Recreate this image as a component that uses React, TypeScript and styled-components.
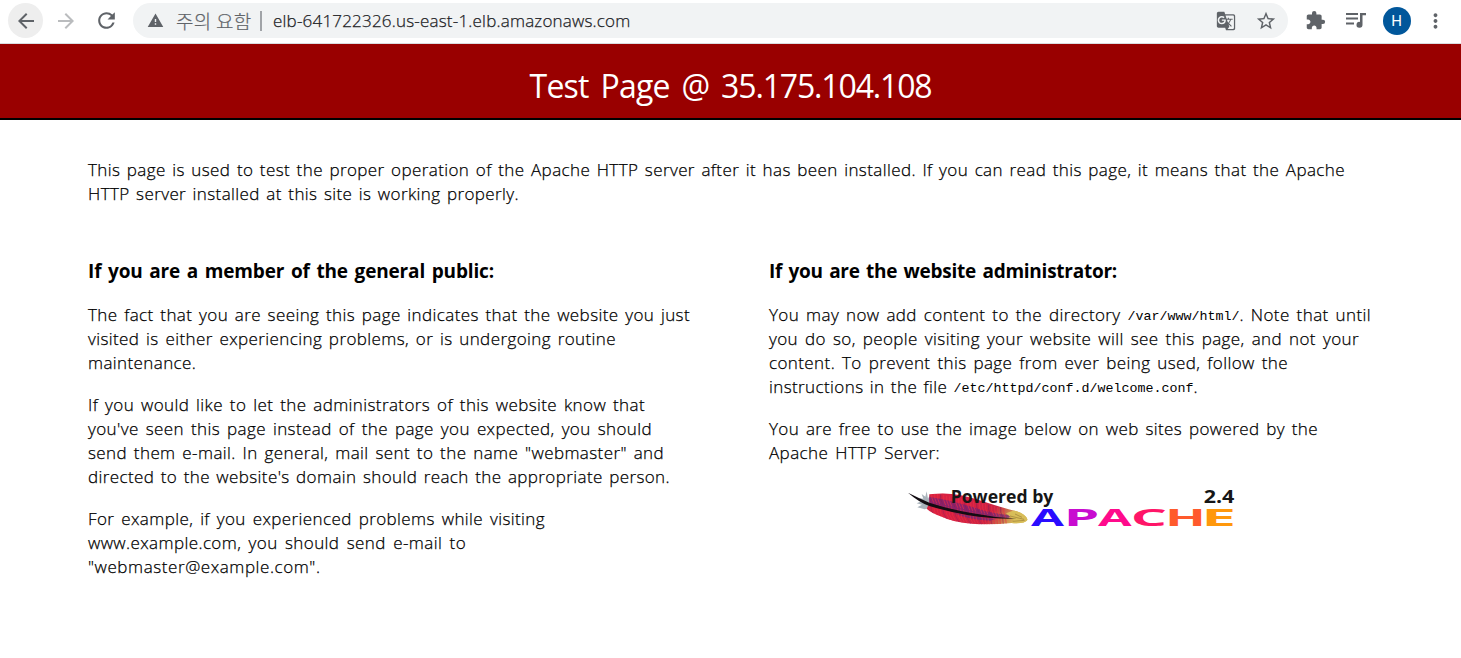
import React from "react";
import styled, { createGlobalStyle } from "styled-components";
import {
  MdArrowBack,
  MdArrowForward,
  MdRefresh,
  MdWarning,
  MdGTranslate,
  MdStarBorder,
  MdExtension,
  MdMoreVert,
} from "react-icons/md";

const GlobalStyle = createGlobalStyle`
  html, body { margin: 0; background: #fff; }
  body {
    font-family: "Open Sans", "Noto Sans CJK KR", sans-serif;
    color: #000;
  }
`;

const Toolbar = styled.header`
  box-sizing: border-box;
  height: 44px;
  padding: 3px 14px 0 8px;
  border-bottom: 1px solid #dadce0;
  display: flex;
  align-items: flex-start;
  color: #5f6368;
`;

const ToolButton = styled.span<{ $w: number; $bg?: string; $fg?: string }>`
  width: ${(p) => p.$w}px;
  height: 35px;
  flex: none;
  display: flex;
  align-items: center;
  justify-content: center;
  border-radius: 50%;
  background: ${(p) => p.$bg ?? "transparent"};
  color: ${(p) => p.$fg ?? "#5f6368"};
`;

const AddressBar = styled.div`
  flex: none;
  box-sizing: border-box;
  width: 1155px;
  height: 35px;
  margin-left: 9px;
  padding: 0 4px 0 14px;
  border-radius: 18px;
  background: #f1f3f4;
  display: flex;
  align-items: center;
`;

const Security = styled.span`
  width: 76px;
  margin-left: 12px;
  font: 300 19px/33px "Noto Sans CJK KR", sans-serif;
  letter-spacing: 0.3px;
  -webkit-text-stroke: 0.2px currentColor;
  white-space: nowrap;
`;

const Divider = styled.i`
  width: 2px;
  height: 20px;
  margin: 0 11px 0 8px;
  background: #a0a3a7;
`;

const Url = styled.span`
  flex: 1;
  font-size: 17px;
  font-weight: 300;
  line-height: 34px;
  letter-spacing: 0.2px;
  -webkit-text-stroke: 0.25px currentColor;
  color: #202124;
  white-space: nowrap;
`;

const Avatar = styled.span`
  width: 28px;
  height: 28px;
  border-radius: 50%;
  background: #01579b;
  color: #fff;
  font: 400 15px/28px Roboto, sans-serif;
  text-align: center;
`;

const Banner = styled.h1`
  box-sizing: border-box;
  height: 76px;
  margin: 0;
  border-bottom: 2px solid #000;
  background: #990000;
  color: #fff;
  font-size: 32px;
  font-weight: 400;
  line-height: 84px;
  display: flex;
  justify-content: center;
`;

const Address = styled.span`
  letter-spacing: -1.15px;
`;

const Content = styled.main`
  padding: 38px 88px 0;
`;

const Columns = styled.div`
  display: grid;
  grid-template-columns: 681px 1fr;
  margin-top: 53px;
`;

const Paragraph = styled.p`
  margin: 0 0 18px;
  font-size: 17px;
  font-weight: 300;
  line-height: 24px;
  -webkit-text-stroke: 0.25px currentColor;
`;

const Heading = styled.h2`
  margin: 0 0 20px;
  font-size: 19px;
  line-height: 24px;
  font-weight: 700;
`;

const Line = styled.span<{ $w: number; $ls?: number }>`
  display: block;
  width: ${(p) => p.$w}px;
  white-space: nowrap;
  text-align: justify;
  text-align-last: justify;
  letter-spacing: ${(p) => p.$ls ?? 0.4}px;
`;

const Code = styled.code`
  font-family: "Liberation Mono", monospace;
  font-size: 13.33px;
  font-weight: 400;
  line-height: 1;
  letter-spacing: 0;
  vertical-align: 1px;
  -webkit-text-stroke: 0;
`;

const LogoRow = styled.div`
  display: flex;
  padding-left: 131px;
  margin-top: -3px;
`;

const QueueIcon = () => (
  <svg width="20" height="17" viewBox="0 0 20 17" fill="currentColor">
    <path d="M0 1h12v2H0zM0 5.500h12v2H0zM0 10.500h8v2H0z" />
    <path d="M14 1h6v2.300h-3.500v9.500a3 3 0 1 1-2.500-2.900z" />
  </svg>
);

const Letter = ({ c, x, w, fill }: { c: string; x: number; w: number; fill: string }) => (
  <text x={x} y={137} fontSize={70} fontWeight={700} fill={fill} textLength={w} lengthAdjust="spacingAndGlyphs">
    {c}
  </text>
);

const barbs = Array.from({ length: 26 }, (_, i) => i);

const ApacheLogo = () => (
  <svg width="345" height="55" viewBox="0 0 1035 165" fontFamily="Open Sans, sans-serif">
    <defs>
      <linearGradient id="vane" x1="0" x2="1" y1="0" y2="0.25">
        <stop offset="0" stopColor="#d5233c" />
        <stop offset="0.35" stopColor="#d91f45" />
        <stop offset="0.75" stopColor="#c92342" />
        <stop offset="0.86" stopColor="#c96a4a" />
        <stop offset="1" stopColor="#d5bd58" />
      </linearGradient>
      <clipPath id="feather">
        <path d="M88 43 L128 40 Q180 42 230 58 Q300 82 350 94 Q376 102 383 119 Q374 132 335 129 Q270 136 215 131 Q160 127 125 110 Q92 98 80 86 L88 70Z" />
      </clipPath>
    </defs>
    <path d="M65 42 L76 50 L80 34 L84 56 L90 44 L92 84 L74 88 L52 82 L66 74 L50 70 L68 62 L56 54 L70 56Z" fill="#a9b3bb" />
    <g clipPath="url(#feather)">
      <rect x="70" y="30" width="320" height="115" fill="url(#vane)" />
      <path d="M86 50 Q160 62 220 82 Q270 100 335 106 L325 114 Q240 114 190 100 Q120 84 86 70Z" fill="#6b237b" opacity="0.7" />
      <path d="M160 98 Q230 112 290 116 L270 122 Q200 118 160 98Z" fill="#5f2a86" opacity="0.7" />
      {barbs.map((i) => {
        const x = 92 + i * 9;
        const y = 66 + i * 1.9;
        return (
          <g key={i} fill="none" strokeWidth="2">
            <path d={`M${x} ${y} q-8 -14 -6 -30`} stroke={i % 4 ? "#ee2f45" : "#8b1c55"} />
            <path d={`M${x} ${y + 3} q-2 24 14 44`} stroke={i % 4 ? "#ea3040" : "#a8244f"} />
          </g>
        );
      })}
      <path d="M318 100 L345 90 L390 108 L384 138 L330 134 L342 120Z" fill="#d8bd59" />
      <path d="M330 108 L372 118 M338 124 L374 121 M345 102 L366 112" stroke="#9c7d36" strokeWidth="2" />
    </g>
    <path d="M24 38 Q52 52 88 68 Q150 88 210 98 Q280 112 350 116 Q270 117 205 106 Q140 94 88 78 Q56 66 24 38Z" fill="#120c12" />
    <g fill="#161616" fontWeight={700} fontSize={55}>
      <text x="152" y="68" textLength="308" lengthAdjust="spacingAndGlyphs">Powered by</text>
      <text x="911" y="69" textLength="92" lengthAdjust="spacingAndGlyphs">2.4</text>
    </g>
    <Letter c="A" x={393} w={99} fill="#2a0cff" />
    <Letter c="P" x={491} w={107} fill="#c80cd0" />
    <Letter c="A" x={594} w={101} fill="#ff0a8c" />
    <Letter c="C" x={692} w={109} fill="#ff1568" />
    <Letter c="H" x={795} w={123} fill="#ff5a2c" />
    <Letter c="E" x={904} w={105} fill="#ff980c" />
  </svg>
);

export default function App() {
  return (
    <>
      <GlobalStyle />
      <Toolbar>
        <ToolButton $w={35} $bg="#eeeeee"><MdArrowBack size={24} /></ToolButton>
        <ToolButton $w={45} $fg="#babcbe"><MdArrowForward size={24} /></ToolButton>
        <ToolButton $w={36}><MdRefresh size={25} /></ToolButton>
        <AddressBar>
          <MdWarning size={17} />
          <Security>주의 요함</Security>
          <Divider />
          <Url>elb-641722326.us-east-1.elb.amazonaws.com</Url>
          <ToolButton $w={44}><MdGTranslate size={20} /></ToolButton>
          <ToolButton $w={36}><MdStarBorder size={22} /></ToolButton>
        </AddressBar>
        <ToolButton $w={54}><MdExtension size={21} /></ToolButton>
        <ToolButton $w={27}><QueueIcon /></ToolButton>
        <ToolButton $w={55}><Avatar>H</Avatar></ToolButton>
        <ToolButton $w={23}><MdMoreVert size={24} /></ToolButton>
      </Toolbar>
      <Banner><Line $w={402} $ls={-0.75}>Test Page @ <Address>35.175.104.108</Address></Line></Banner>
      <Content>
        <Paragraph>
          <Line $w={1257}>This page is used to test the proper operation of the Apache HTTP server after it has been installed. If you can read this page, it means that the Apache</Line>
          <Line $w={431}>HTTP server installed at this site is working properly.</Line>
        </Paragraph>
        <Columns>
          <section>
            <Heading><Line $w={406} $ls={-0.15}>If you are a member of the general public:</Line></Heading>
            <Paragraph>
              <Line $w={602}>The fact that you are seeing this page indicates that the website you just</Line>
              <Line $w={528}>visited is either experiencing problems, or is undergoing routine</Line>
              <Line $w={108}>maintenance.</Line>
            </Paragraph>
            <Paragraph>
              <Line $w={557}>If you would like to let the administrators of this website know that</Line>
              <Line $w={564}>you've seen this page instead of the page you expected, you should</Line>
              <Line $w={576}>send them e-mail. In general, mail sent to the name "webmaster" and</Line>
              <Line $w={582}>directed to the website's domain should reach the appropriate person.</Line>
            </Paragraph>
            <Paragraph>
              <Line $w={457}>For example, if you experienced problems while visiting</Line>
              <Line $w={378}>www.example.com, you should send e-mail to</Line>
              <Line $w={232} $ls={0.58}>"webmaster@example.com".</Line>
            </Paragraph>
          </section>
          <section>
            <Heading><Line $w={348} $ls={-0.25}>If you are the website administrator:</Line></Heading>
            <Paragraph>
              <Line $w={602}>You may now add content to the directory <Code>/var/www/html/</Code>. Note that until</Line>
              <Line $w={590}>you do so, people visiting your website will see this page, and not your</Line>
              <Line $w={519}>content. To prevent this page from ever being used, follow the</Line>
              <Line $w={429}>instructions in the file <Code>/etc/httpd/conf.d/welcome.conf</Code>.</Line>
            </Paragraph>
            <Paragraph>
              <Line $w={549}>You are free to use the image below on web sites powered by the</Line>
              <Line $w={171}>Apache HTTP Server:</Line>
            </Paragraph>
            <LogoRow><ApacheLogo /></LogoRow>
          </section>
        </Columns>
      </Content>
    </>
  );
}
